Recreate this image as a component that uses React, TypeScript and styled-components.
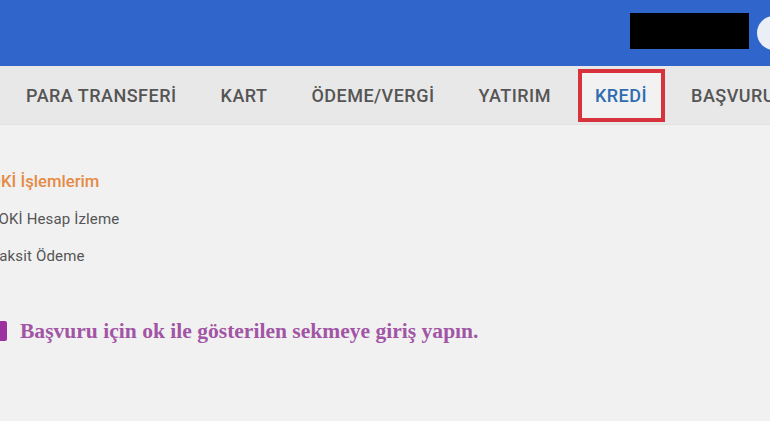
import React from 'react';
import styled, { createGlobalStyle } from 'styled-components';

const GlobalStyle = createGlobalStyle`
  html, body {
    margin: 0;
    padding: 0;
    background: #ffffff;
    overflow: hidden;
  }
`;

const Page = styled.div`
  width: 770px;
  height: 430px;
  overflow: hidden;
  display: flex;
  flex-direction: column;
  background: #ffffff;
  font-family: Roboto, "Liberation Sans", sans-serif;
`;

const Header = styled.header`
  height: 66px;
  flex: none;
  display: flex;
  align-items: center;
  justify-content: flex-end;
  gap: 8px;
  background: #3065cc;
`;

const Redacted = styled.div`
  flex: none;
  width: 119px;
  height: 36px;
  margin-bottom: 4px;
  background: #000000;
`;

const Avatar = styled.div`
  flex: none;
  width: 34px;
  height: 34px;
  margin-right: -21px;
  border-radius: 50%;
  background: #eaeef5;
`;

const Nav = styled.nav`
  height: 56px;
  flex: none;
  display: flex;
  align-items: center;
  gap: 44px;
  padding: 2px 0 0 26px;
  box-sizing: content-box;
  margin-bottom: -2px;
  background: #e8e8e8;
  border-bottom: 3px solid #e2e2e2;
  white-space: nowrap;
`;

const NavItem = styled.a<{ $active?: boolean }>`
  position: relative;
  z-index: 0;
  font-size: 18px;
  line-height: 20px;
  font-weight: 500;
  letter-spacing: 0.48px;
  color: ${({ $active }) => ($active ? '#2f6db0' : '#555555')};
`;

const Highlight = styled.span`
  position: absolute;
  left: -17px;
  right: -18px;
  top: -17px;
  height: 53px;
  box-sizing: border-box;
  border: 4px solid #d8323c;
  z-index: -1;
  background: #f2f2f2;
`;

const Content = styled.main`
  height: 296px;
  flex: none;
  background: #f1f1f1;
  padding-top: 47px;
  box-sizing: border-box;
`;

const SideTitle = styled.div`
  margin-left: -21px;
  font-size: 16.7px;
  line-height: 20px;
  font-weight: 500;
  color: #e58a45;
`;

const SideList = styled.ul`
  list-style: none;
  margin: 18px 0 0;
  padding: 0;
  display: flex;
  flex-direction: column;
  gap: 18px;
`;

const SideItem = styled.li<{ $shift: number }>`
  margin-left: ${({ $shift }) => $shift}px;
  font-size: 15px;
  line-height: 19px;
  letter-spacing: 0.15px;
  color: #555555;
`;

const Notice = styled.p`
  margin: 53px 0 0;
  display: flex;
  align-items: center;
  gap: 13px;
  font-family: "Liberation Serif", "Times New Roman", serif;
  font-size: 21.55px;
  line-height: 24px;
  font-weight: 700;
  color: #a255a5;
  white-space: nowrap;
`;

const Bullet = styled.span`
  flex: none;
  width: 7px;
  height: 20px;
  border-radius: 0 2px 2px 0;
  background: #9c32a0;
`;

export default function App (): React.ReactElement {
  return (
    <Page>
      <GlobalStyle />
      <Header>
        <Redacted />
        <Avatar />
      </Header>
      <Nav>
        <NavItem>PARA TRANSFERİ</NavItem>
        <NavItem>KART</NavItem>
        <NavItem>ÖDEME/VERGİ</NavItem>
        <NavItem>YATIRIM</NavItem>
        <NavItem $active>KREDİ<Highlight /></NavItem>
        <NavItem>BAŞVURU</NavItem>
      </Nav>
      <Content>
        <SideTitle>BOKİ İşlemlerim</SideTitle>
        <SideList>
          <SideItem $shift={-11}>BOKİ Hesap İzleme</SideItem>
          <SideItem $shift={-9}>Taksit Ödeme</SideItem>
        </SideList>
        <Notice><Bullet />Başvuru için ok ile gösterilen sekmeye giriş yapın.</Notice>
      </Content>
    </Page>
  );
}
